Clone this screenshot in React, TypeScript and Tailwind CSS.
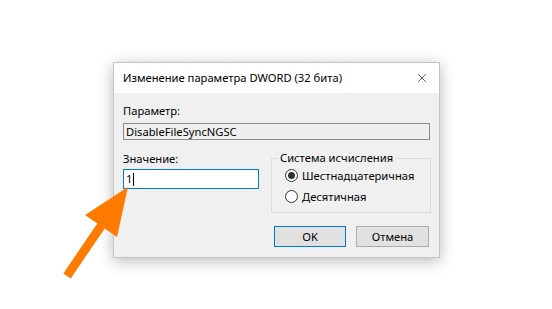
import { X } from 'lucide-react'

function Radio({ checked, label }: { checked?: boolean; label: string }) {
  return (
    <div className="flex h-[21px] items-center gap-[4px]">
      <span className="flex h-[13px] w-[13px] items-center justify-center rounded-full border border-[#333] bg-white">
        {checked && <span className="h-[7px] w-[7px] rounded-full bg-[#333]" />}
      </span>
      <span className="text-black">{label}</span>
    </div>
  )
}

export default function App() {
  return (
    <div className="relative h-[309px] w-[552px] overflow-hidden bg-white text-[11.2px] leading-[16px] text-black font-['Noto_Sans',sans-serif]">
      <div className="pl-[113px] pt-[62px]">
        <div className="flex h-[196px] w-[327px] flex-col border border-[#c4c4c4] shadow-[0_3px_14px_rgba(0,0,0,0.28)]">
          <div className="flex h-[30px] items-center justify-between bg-white pl-[9px] pr-[10px]">
            <span>Изменение параметра DWORD (32 бита)</span>
            <X className="h-[14px] w-[14px]" strokeWidth={1.1} />
          </div>

          <div className="flex flex-1 flex-col bg-[#f0f0f0] px-[9px] pt-[10px]">
            <p>Параметр:</p>
            <div className="mt-[4px] flex h-[17px] items-center border border-[#8c8c8c] bg-[#efefef] px-[2px]">
              DisableFileSyncNGSC
            </div>

            <div className="mt-[11px] grid grid-cols-[136px_160px] gap-x-[12px]">
              <div>
                <p>Значение:</p>
                <div className="mt-[2px] flex h-[20px] items-center border border-[#0078d7] bg-white px-[2px]">
                  1<span className="ml-px h-[13px] w-px bg-black" />
                </div>
              </div>
              <div className="relative mt-[7px] h-[55px] border border-[#dcdcdc] pl-[13px] pt-[6px]">
                <span className="absolute -top-[9px] left-[6px] bg-[#f0f0f0] px-[2px]">Система исчисления</span>
                <Radio checked label="Шестнадцатеричная" />
                <Radio label="Десятичная" />
              </div>
            </div>

            <div className="mt-[13px] flex justify-end gap-[10px] pr-px">
              <button type="button" className="h-[21px] w-[72px] border border-[#0078d7] bg-[#e1e1e1]">OK</button>
              <button type="button" className="h-[21px] w-[73px] border border-[#adadad] bg-[#e1e1e1]">Отмена</button>
            </div>
          </div>
        </div>
      </div>

      <svg className="absolute left-0 top-0" width="552" height="309" viewBox="0 0 552 309">
        <polygon
          fill="#ff7b00"
          points="128,187 117,237 104.7,228.5 70.7,278.5 63.3,273.5 97.3,223.5 85,215"
        />
      </svg>
    </div>
  )
}
